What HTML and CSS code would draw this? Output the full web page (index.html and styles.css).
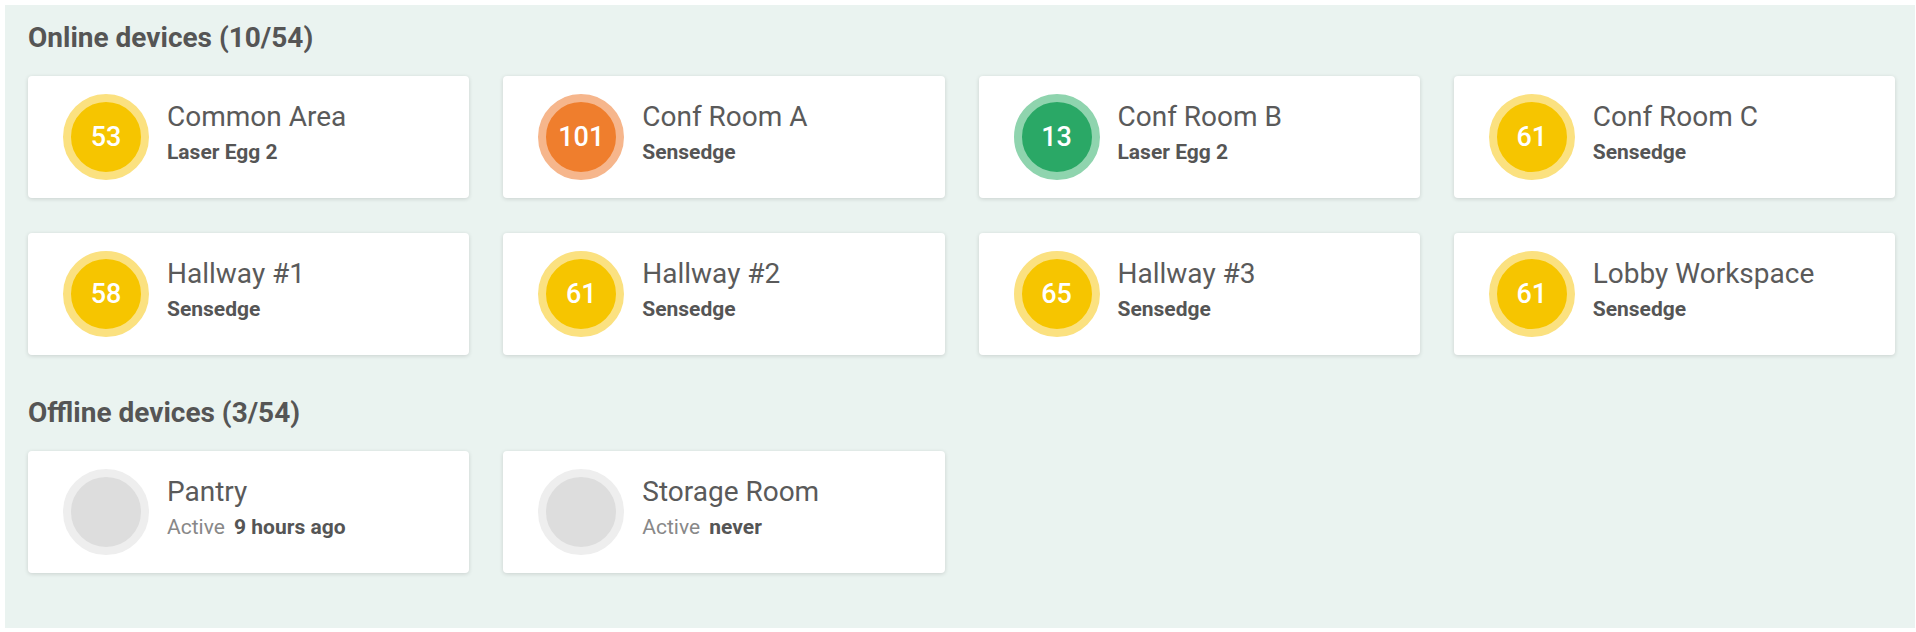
FILE: index.html
```html
<!DOCTYPE html>
<html lang="en">
<head>
    <meta charset="UTF-8">
    <meta name="viewport" content="width=device-width, initial-scale=1.0">
    <title>Devices</title>
    <link rel="stylesheet" href="styles.css">
</head>
<body>
    <div class="panel">
        <h2 class="section-title">Online devices (10/54)</h2>
        <div class="device-grid">
            <div class="device-card">
                <div class="badge yellow">53</div>
                <div class="device-info">
                    <div class="device-name">Common Area</div>
                    <div class="device-model">Laser Egg 2</div>
                </div>
            </div>
            <div class="device-card">
                <div class="badge orange">101</div>
                <div class="device-info">
                    <div class="device-name">Conf Room A</div>
                    <div class="device-model">Sensedge</div>
                </div>
            </div>
            <div class="device-card">
                <div class="badge green">13</div>
                <div class="device-info">
                    <div class="device-name">Conf Room B</div>
                    <div class="device-model">Laser Egg 2</div>
                </div>
            </div>
            <div class="device-card">
                <div class="badge yellow">61</div>
                <div class="device-info">
                    <div class="device-name">Conf Room C</div>
                    <div class="device-model">Sensedge</div>
                </div>
            </div>
            <div class="device-card">
                <div class="badge yellow">58</div>
                <div class="device-info">
                    <div class="device-name">Hallway #1</div>
                    <div class="device-model">Sensedge</div>
                </div>
            </div>
            <div class="device-card">
                <div class="badge yellow">61</div>
                <div class="device-info">
                    <div class="device-name">Hallway #2</div>
                    <div class="device-model">Sensedge</div>
                </div>
            </div>
            <div class="device-card">
                <div class="badge yellow">65</div>
                <div class="device-info">
                    <div class="device-name">Hallway #3</div>
                    <div class="device-model">Sensedge</div>
                </div>
            </div>
            <div class="device-card">
                <div class="badge yellow">61</div>
                <div class="device-info">
                    <div class="device-name">Lobby Workspace</div>
                    <div class="device-model">Sensedge</div>
                </div>
            </div>
        </div>

        <h2 class="section-title">Offline devices (3/54)</h2>
        <div class="device-grid">
            <div class="device-card">
                <div class="badge offline"></div>
                <div class="device-info">
                    <div class="device-name">Pantry</div>
                    <div class="device-model"><span class="active-label">Active</span> 9 hours ago</div>
                </div>
            </div>
            <div class="device-card">
                <div class="badge offline"></div>
                <div class="device-info">
                    <div class="device-name">Storage Room</div>
                    <div class="device-model"><span class="active-label">Active</span> never</div>
                </div>
            </div>
        </div>
    </div>
</body>
</html>
```

FILE: styles.css
```css
body {
    margin: 0;
    padding: 5px 1px 4px 5px;
    background-color: #fff;
    font-family: Roboto, "Liberation Sans", Arial, sans-serif;
}

.panel {
    height: 623px;
    box-sizing: border-box;
    padding: 17px 20px 0 23px;
    background-color: #eaf3f0;
}

.section-title {
    margin: 0 0 22px 0;
    font-size: 28px;
    line-height: 32px;
    font-weight: 700;
    color: #555;
}

.device-grid {
    display: grid;
    grid-template-columns: repeat(4, 1fr);
    column-gap: 34px;
    row-gap: 35px;
    margin-bottom: 42px;
}

.device-card {
    display: flex;
    align-items: center;
    height: 122px;
    padding: 0 35px;
    background-color: #fff;
    border-radius: 4px;
    box-shadow: 0 1px 4px rgba(0, 0, 0, 0.14);
}

.badge {
    flex: none;
    width: 70px;
    height: 70px;
    border: 8px solid;
    border-radius: 50%;
    display: flex;
    align-items: center;
    justify-content: center;
    font-size: 27px;
    font-weight: 500;
    color: #fff;
}

.yellow {
    background-color: #f6c500;
    border-color: #fbe180;
}

.orange {
    background-color: #ef7e2d;
    border-color: #f6b68c;
}

.green {
    background-color: #2aa866;
    border-color: #8fd4ae;
}

.offline {
    background-color: #dddddd;
    border-color: #eeeeee;
}

.device-info {
    margin-left: 18px;
    padding-bottom: 9px;
}

.device-name {
    font-size: 28px;
    line-height: 32px;
    color: #5a5a5a;
}

.device-model {
    margin-top: 6px;
    font-size: 21px;
    line-height: 26px;
    font-weight: 700;
    color: #555;
}

.active-label {
    font-weight: 400;
    color: #888;
    margin-right: 4px;
}
```
